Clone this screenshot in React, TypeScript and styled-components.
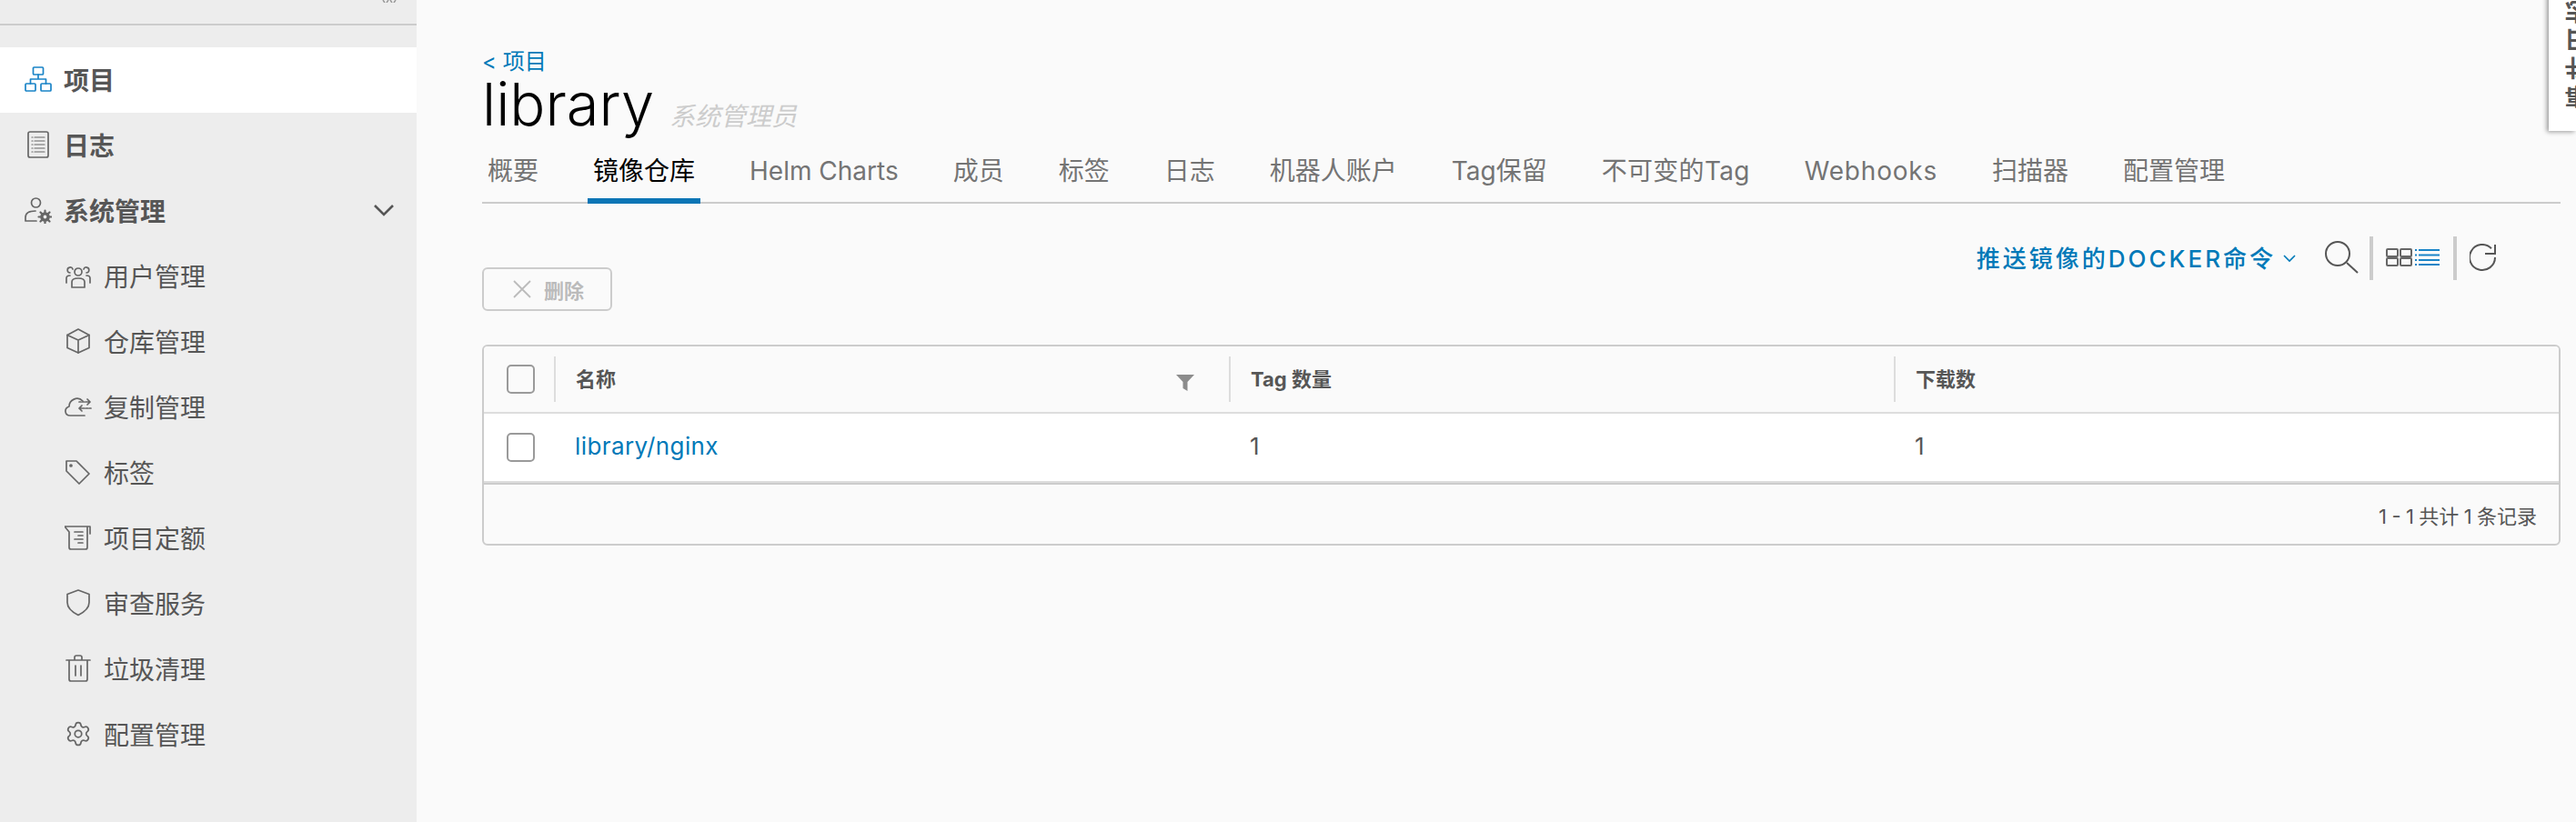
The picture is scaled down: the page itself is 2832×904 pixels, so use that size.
import React from 'react';
import styled, { createGlobalStyle } from 'styled-components';
import { Settings } from 'lucide-react';

const Global = createGlobalStyle`
  html, body { margin: 0; padding: 0; background: #fafafa; }
  body { font-family: "Inter", "Noto Sans CJK SC", sans-serif; overflow: hidden; }
  * { box-sizing: border-box; }
`;

const Page = styled.div`
  position: relative;
  display: flex;
  width: 2832px;
  height: 904px;
  overflow: hidden;
`;

const Side = styled.aside`
  width: 458px;
  flex: none;
  background: #ededed;
`;

const SideTop = styled.div`
  display: flex;
  justify-content: flex-end;
  height: 28px;
  padding-right: 22px;
  border-bottom: 2px solid #ccc;
  margin-bottom: 24px;
`;

const NavRow = styled.div<{ $active?: boolean; $sub?: boolean }>`
  display: flex;
  align-items: center;
  height: 72px;
  padding: 0 0 2px ${p => (p.$sub ? '71px' : '27px')};
  background: ${p => (p.$active ? '#fff' : 'transparent')};
  color: #565656;
  font-family: "Noto Sans CJK SC", sans-serif;
  font-size: 28px;
  font-weight: ${p => (p.$sub ? 400 : 700)};
  svg { flex: none; width: 30px; height: 30px; margin-right: 13px; }
`;

const Caret = styled.svg`
  margin-left: auto;
  margin-right: 24px !important;
  width: 24px !important;
  height: 16px !important;
`;

const Main = styled.main`
  flex: 1;
  min-width: 0;
  padding: 56px 17px 0 72px;
`;

const Back = styled.a`
  display: block;
  height: 24px;
  line-height: 24px;
  color: #0079b8;
  font-size: 24px;
`;

const TitleRow = styled.div`
  display: flex;
  align-items: baseline;
  height: 70px;
`;

const Title = styled.h1`
  margin: 0;
  font-size: 65px;
  line-height: 70px;
  font-weight: 300;
  color: #000;
`;

const Role = styled.span`
  margin-left: 17px;
  color: #ccc;
  font-family: "Noto Sans CJK SC", sans-serif;
  font-size: 28px;
  font-style: italic;
`;

const Tabs = styled.nav`
  display: flex;
  height: 74px;
  gap: 48px;
  border-bottom: 2px solid #ccc;
`;

const Tab = styled.div<{ $active?: boolean; $track?: number }>`
  height: 74px;
  padding: 20px 6px 0;
  line-height: 36px;
  font-size: 28px;
  letter-spacing: ${p => p.$track || 0}px;
  white-space: nowrap;
  color: ${p => (p.$active ? '#000' : '#747474')};
  border-bottom: ${p => (p.$active ? '6px solid #0b75b5' : '0')};
`;

const Tools = styled.div`
  display: flex;
  align-items: center;
  justify-content: flex-end;
  height: 48px;
  margin-top: 36px;
  padding-right: 70px;
`;

const PushLink = styled.span`
  margin-bottom: 4px;
  color: #0079b8;
  font-size: 26px;
  font-weight: 500;
  letter-spacing: 3px;
  white-space: nowrap;
`;

const Divider = styled.span`
  width: 4px;
  height: 48px;
  background: #ccc;
`;

const IconBtn = styled.svg<{ $m?: string }>`
  display: block;
  flex: none;
  margin: ${p => p.$m || '0'};
`;

const DeleteBtn = styled.button`
  display: flex;
  align-items: center;
  gap: 14px;
  width: 143px;
  height: 48px;
  margin-top: -14px;
  padding: 0 0 0 32px;
  background: transparent;
  border: 2px solid #ccc;
  border-radius: 6px;
  color: #bbb;
  font-family: "Noto Sans CJK SC", sans-serif;
  font-size: 22px;
  font-weight: 700;
`;

const Grid = styled.div`
  margin-top: 37px;
  height: 221px;
  border: 2px solid #ccc;
  border-radius: 6px;
  overflow: hidden;
`;

const Row = styled.div<{ $head?: boolean }>`
  display: grid;
  grid-template-columns: 77px 742px 731px 1fr;
  align-items: center;
  height: ${p => (p.$head ? '74px' : '76px')};
  background: ${p => (p.$head ? '#fafafa' : '#fff')};
  border-bottom: 2px solid #ddd;
  color: #565656;
`;

const Check = styled.span`
  display: block;
  width: 31px;
  height: 32px;
  margin-left: 25px;
  background: transparent;
  border: 2px solid #9a9a9a;
  border-radius: 5px;
`;

const HeadCell = styled.div`
  display: flex;
  align-items: center;
  height: 50px;
  padding: 0 0 5px 22px;
  border-left: 2px solid #ddd;
  font-size: 22px;
  font-weight: 700;
  color: #565656;
`;

const Cell = styled.div`
  padding: 0 0 3px 23px;
  font-size: 26px;
`;

const RepoLink = styled.a`
  color: #0079b8;
  letter-spacing: 0.4px;
`;

const Filter = styled.svg`
  margin-left: auto;
  margin-right: 38px;
  margin-top: 13px;
`;

const Foot = styled.div`
  display: flex;
  align-items: center;
  justify-content: flex-end;
  height: 67px;
  padding-right: 24px;
  border-top: 2px solid #ccc;
  font-size: 22px;
  word-spacing: -0.800px;
  color: #565656;
`;

const LogTab = styled.div`
  position: absolute;
  top: 0;
  right: 0;
  width: 30px;
  height: 144px;
  overflow: hidden;
  background: #fff;
`;

const LogShadow = styled.div`
  position: absolute;
  top: -8px;
  right: 0;
  width: 30px;
  height: 152px;
  box-shadow: -2px 1px 5px rgba(0, 0, 0, 0.4);
`;

const LogText = styled.span`
  position: absolute;
  bottom: 25px;
  left: 16px;
  writing-mode: vertical-rl;
  transform: rotate(180deg);
  line-height: 30px;
  font-family: "Noto Sans CJK SC", sans-serif;
  font-size: 26px;
  font-weight: 700;
  letter-spacing: 5px;
  white-space: nowrap;
  color: #565656;
`;

const Blue = '#1a84c7';
const Grey = '#666';

const Ic = ({ c = Grey, children }: { c?: string; children: React.ReactNode }) => (
  <svg viewBox="0 0 30 30" fill="none" stroke={c} strokeWidth="1.7" strokeLinejoin="round" strokeLinecap="round">
    {children}
  </svg>
);

const ProjectIcon = () => (
  <Ic c={Blue}>
    <rect x="9.5" y="2" width="11" height="8" rx="1" />
    <rect x="1" y="20" width="11" height="8" rx="1" />
    <rect x="18" y="20" width="11" height="8" rx="1" />
    <path d="M15 10v5M6.5 20v-5h17v5" />
  </Ic>
);
const LogIcon = () => (
  <Ic>
    <rect x="4" y="1" width="22" height="28" rx="2" />
    <path strokeWidth="1.200" d="M8 7h1M11 7h11M8 11h1M11 11h11M8 15h1M11 15h11M8 19h1M11 19h11M8 23h1M11 23h11" />
  </Ic>
);
const AdminIcon = () => (
  <Ic>
    <circle cx="12.5" cy="7" r="5" />
    <path d="M1 27v-4c0-5 5-7 11-7M1 27h12" />
    <circle cx="22.5" cy="22.5" r="3.6" strokeWidth="3.4" />
    <path d="M22.5 15.500v2M22.5 27.500v2M15.500 22.5h2M27.500 22.500h2M17.500 17.500l1.400 1.400M26.100 26.100l1.400 1.400M27.500 17.500l-1.400 1.400M18.900 26.100l-1.400 1.400" strokeWidth="2.200" />
  </Ic>
);
const UsersIcon = () => (
  <Ic>
    <circle cx="15" cy="11" r="4" />
    <path d="M8 28v-6c0-3 3-4 7-4s7 1 7 4v6z" />
    <path d="M9 8a3 3 0 1 0-3 4M21 8a3 3 0 1 1 3 4M2 23v-5c0-2 2-3 4-3M28 23v-5c0-2-2-3-4-3" />
  </Ic>
);
const BoxIcon = () => (
  <Ic>
    <path d="M15 2l12 6.500v14L15 28 3 22.500v-14z" />
    <path d="M3 8.500l12 5.500 12-5.500M15 14v14" />
  </Ic>
);
const CloudIcon = () => (
  <Ic>
    <path d="M22 25H6c-6 0-7-8-1-10 0-7 9-12 15-6" />
    <path d="M16 10h2M19.500 10h2M23 10h5M25 7l3 3-3 3" />
    <path d="M29 17h-2M25.500 17h-2M22 17h-6M19 14l-3 3 3 3" />
  </Ic>
);
const TagIcon = () => (
  <Ic>
    <path d="M2 3h11l14 14-11 11L2 14z" />
    <circle cx="7" cy="8" r="1" />
  </Ic>
);
const QuotaIcon = () => (
  <Ic>
    <path d="M0 3h28v8M0 3l5 6v17c0 1 1 2 2 2h16c1 0 2-1 2-2V3" />
    <path d="M11 9h9M15 13h5M11 17h9M15 21h5" />
  </Ic>
);
const ShieldIcon = () => (
  <Ic>
    <path d="M15 1l12 4.500v9c0 7-6 11-12 14-6-3-12-7-12-14v-9z" />
  </Ic>
);
const TrashIcon = () => (
  <Ic>
    <path d="M2 6h26M5 6v21c0 1 1 2 2 2h16c1 0 2-1 2-2V6M11 6V3c0-1 1-2 2-2h4c1 0 2 1 2 2v3M12 12v11M18 12v11" />
  </Ic>
);

const subs: [React.ReactNode, string][] = [
  [<UsersIcon />, '用户管理'],
  [<BoxIcon />, '仓库管理'],
  [<CloudIcon />, '复制管理'],
  [<TagIcon />, '标签'],
  [<QuotaIcon />, '项目定额'],
  [<ShieldIcon />, '审查服务'],
  [<TrashIcon />, '垃圾清理'],
  [<Settings color={Grey} strokeWidth={1.4} />, '配置管理'],
];

const tabs = ['概要', '镜像仓库', 'Helm Charts', '成员', '标签', '日志', '机器人账户', 'Tag保留', '不可变的Tag', 'Webhooks', '扫描器', '配置管理'];

export default function App() {
  return (
    <Page>
      <Global />
      <Side>
        <SideTop>
          <IconBtn width="16" height="3" viewBox="0 0 16 3" fill="none" stroke="#999" strokeWidth="1.500"><path d="M1 0l2 3M9 0l2 3M7 0L5 3M15 0l-2 3" /></IconBtn>
        </SideTop>
        <NavRow $active><ProjectIcon />项目</NavRow>
        <NavRow><LogIcon />日志</NavRow>
        <NavRow>
          <AdminIcon />系统管理
          <Caret viewBox="0 0 24 16" fill="none" stroke="#565656" strokeWidth="2.600"><path d="M2 3l10 10L22 3" /></Caret>
        </NavRow>
        {subs.map(([icon, label]) => (
          <NavRow $sub key={label}>{icon}{label}</NavRow>
        ))}
      </Side>
      <Main>
        <Back>&lt; 项目</Back>
        <TitleRow>
          <Title>library</Title>
          <Role>系统管理员</Role>
        </TitleRow>
        <Tabs>
          {tabs.map(t => <Tab key={t} $active={t === '镜像仓库'} $track={t === 'Webhooks' ? 0.8 : t === '不可变的Tag' ? 0.3 : 0}>{t}</Tab>)}
        </Tabs>
        <Tools>
          <PushLink>推送镜像的DOCKER命令</PushLink>
          <IconBtn $m="0 32px 0 8px" width="14" height="9" viewBox="0 0 14 9" fill="none" stroke="#0079b8" strokeWidth="1.600"><path d="M1 1l6 6 6-6" /></IconBtn>
          <IconBtn $m="0 11px 2px 0" width="38" height="36" viewBox="0 0 38 36" fill="none" stroke="#565656" strokeWidth="2"><circle cx="14" cy="14" r="13" /><path d="M24 24l12 11" /></IconBtn>
          <Divider />
          <IconBtn $m="0 14px 2px" width="60" height="20" viewBox="0 0 60 20" fill="none" strokeWidth="2">
            <g stroke="#666">
              <rect x="1" y="1" width="12" height="8" rx="1" /><rect x="16" y="1" width="12" height="8" rx="1" />
              <rect x="1" y="11" width="12" height="8" rx="1" /><rect x="16" y="11" width="12" height="8" rx="1" />
            </g>
            <path d="M36 2h23M36 7.500h23M36 13h23M36 18h23M32 2h2M32 7.500h2M32 13h2M32 18h2" stroke={Blue} />
          </IconBtn>
          <Divider />
          <IconBtn $m="0 0 2px 14px" width="30" height="31" viewBox="0 0 30 31" fill="none" stroke="#565656" strokeWidth="2"><path d="M24 5.200A14 14 0 1 0 28 15M28 1v10H17" /></IconBtn>
        </Tools>
        <DeleteBtn>
          <svg width="20" height="20" viewBox="0 0 20 20" stroke="#bbb" strokeWidth="1.800"><path d="M1 1l18 18M19 1L1 19" /></svg>
          删除
        </DeleteBtn>
        <Grid>
          <Row $head>
            <Check />
            <HeadCell>
              名称
              <Filter width="20" height="18" viewBox="0 0 20 18" fill="#8c8c8c"><path d="M0 0h20l-7.500 8v10l-5-3V8z" /></Filter>
            </HeadCell>
            <HeadCell>Tag 数量</HeadCell>
            <HeadCell>下载数</HeadCell>
          </Row>
          <Row>
            <Check />
            <Cell><RepoLink>library/nginx</RepoLink></Cell>
            <Cell>1</Cell>
            <Cell>1</Cell>
          </Row>
          <Foot>1 - 1 共计 1 条记录</Foot>
        </Grid>
      </Main>
      <LogShadow />
      <LogTab><LogText>事件日志</LogText></LogTab>
    </Page>
  );
}
